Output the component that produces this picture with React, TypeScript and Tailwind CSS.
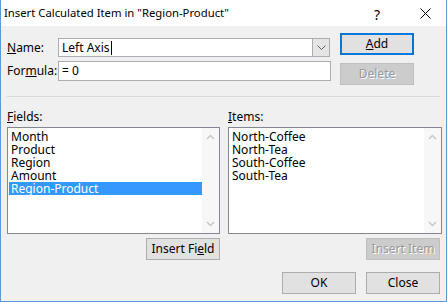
import React from 'react'

const font = { fontFamily: '"Noto Sans", "Open Sans", Arial, sans-serif' }

function Btn({ children, disabled, primary, className = '' }: { children: React.ReactNode; disabled?: boolean; primary?: boolean; className?: string }) {
  return (
    <div
      className={
        'w-[74px] h-[22px] flex items-center justify-center text-[12px] leading-none ' +
        (disabled
          ? 'bg-[#cccccc] border border-[#bfbfbf] text-[#9a9a9a] [text-shadow:1px_1px_0_#fff] '
          : primary
          ? 'bg-[#e1e1e1] border-2 border-[#0078d7] text-black '
          : 'bg-[#e1e1e1] border border-[#adadad] text-black ') +
        className
      }
    >
      {children}
    </div>
  )
}

function ListBox({ items, selected, width }: { items: string[]; selected?: number; width: string }) {
  return (
    <div className={'h-[107px] border border-[#828790] bg-white flex ' + width}>
      <div className="flex-1 pt-[2px] pl-[1px]">
        {items.map((it, i) => (
          <div
            key={it}
            className={
              'h-[13px] leading-[13px] pl-[2px] text-[12px] ' +
              (i === selected ? 'bg-[#3399ff] text-white' : 'text-black')
            }
          >
            {it}
          </div>
        ))}
      </div>
      <div className="w-[17px] bg-[#f7f7f7] flex flex-col items-center justify-between py-[6px]">
        <svg width="9" height="6" viewBox="0 0 9 6">
          <path d="M1 5 L4.5 1.5 L8 5" stroke="#c8c8c8" strokeWidth="1.5" fill="none" />
        </svg>
        <svg width="9" height="6" viewBox="0 0 9 6">
          <path d="M1 1 L4.5 4.5 L8 1" stroke="#c8c8c8" strokeWidth="1.5" fill="none" />
        </svg>
      </div>
    </div>
  )
}

export default function App() {
  return (
    <div style={font} className="w-[447px] h-[302px] bg-[#f0f0f0] border-x border-b border-[#5a9ad8] flex flex-col text-black">
      {/* Title bar */}
      <div className="h-[26px] bg-white flex items-center pl-[3px] text-[11.3px] relative">
        <span>Insert Calculated Item in "Region-Product"</span>
        <span className="absolute left-[373px] top-[4px] text-[14px]">?</span>
        <svg className="absolute left-[419px] top-[8px]" width="11" height="11" viewBox="0 0 11 11">
          <path d="M0.5 0.5 L10.5 10.5 M10.5 0.5 L0.5 10.5" stroke="#000" strokeWidth="1" />
        </svg>
      </div>

      <div className="flex flex-col pl-[6px] pr-[4px] text-[12px]">
        {/* Name / Formula + Add / Delete */}
        <div className="flex items-start">
          <div className="flex flex-col gap-[4px] mt-[12px]">
            <div className="flex items-center h-[19px]">
              <span className="w-[51px]"><u>N</u>ame:</span>
              <div className="w-[272px] h-[19px] border border-[#abadb3] bg-white flex">
                <div className="flex-1 flex items-center pl-[3px]">
                  Left Axis<span className="w-px h-[14px] bg-black ml-[1px]" />
                </div>
                <div className="w-[17px] bg-[#e5e5e5] border-l border-[#abadb3] flex items-center justify-center">
                  <svg width="9" height="5" viewBox="0 0 9 5">
                    <path d="M0.5 0.5 L4.5 4.5 L8.5 0.5" stroke="#606060" strokeWidth="1" fill="none" />
                  </svg>
                </div>
              </div>
            </div>
            <div className="flex items-center h-[20px]">
              <span className="w-[51px]">For<u>m</u>ula:</span>
              <div className="w-[273px] h-[20px] border border-[#abadb3] bg-white flex items-center pl-[3px]">= 0</div>
            </div>
          </div>
          <div className="flex flex-col gap-[8px] mt-[7px] ml-[9px]">
            <Btn primary><u>A</u>dd</Btn>
            <Btn disabled>Delete</Btn>
          </div>
        </div>

        {/* Separator */}
        <div className="mt-[11px] mr-[2px] border-t border-[#d9d9d9]" />

        {/* Lists */}
        <div className="flex mt-[12px] gap-[8px]">
          <div className="flex flex-col">
            <div className="h-[16px] leading-[16px]"><u>F</u>ields:</div>
            <div className="mt-[2px]">
              <ListBox width="w-[213px]" items={['Month', 'Product', 'Region', 'Amount', 'Region-Product']} selected={4} />
            </div>
            <div className="flex justify-end mt-[4px]">
              <Btn>Insert Fi<u>e</u>ld</Btn>
            </div>
          </div>
          <div className="flex flex-col">
            <div className="h-[16px] leading-[16px]"><u>I</u>tems:</div>
            <div className="mt-[2px]">
              <ListBox width="w-[214px]" items={['North-Coffee', 'North-Tea', 'South-Coffee', 'South-Tea']} />
            </div>
            <div className="flex justify-end mt-[4px] mr-[2px]">
              <Btn disabled>Insert Item</Btn>
            </div>
          </div>
        </div>

        {/* OK / Close */}
        <div className="flex justify-end gap-[10px] mt-[12px] mr-[2px]">
          <Btn>OK</Btn>
          <Btn>Close</Btn>
        </div>
      </div>
    </div>
  )
}
